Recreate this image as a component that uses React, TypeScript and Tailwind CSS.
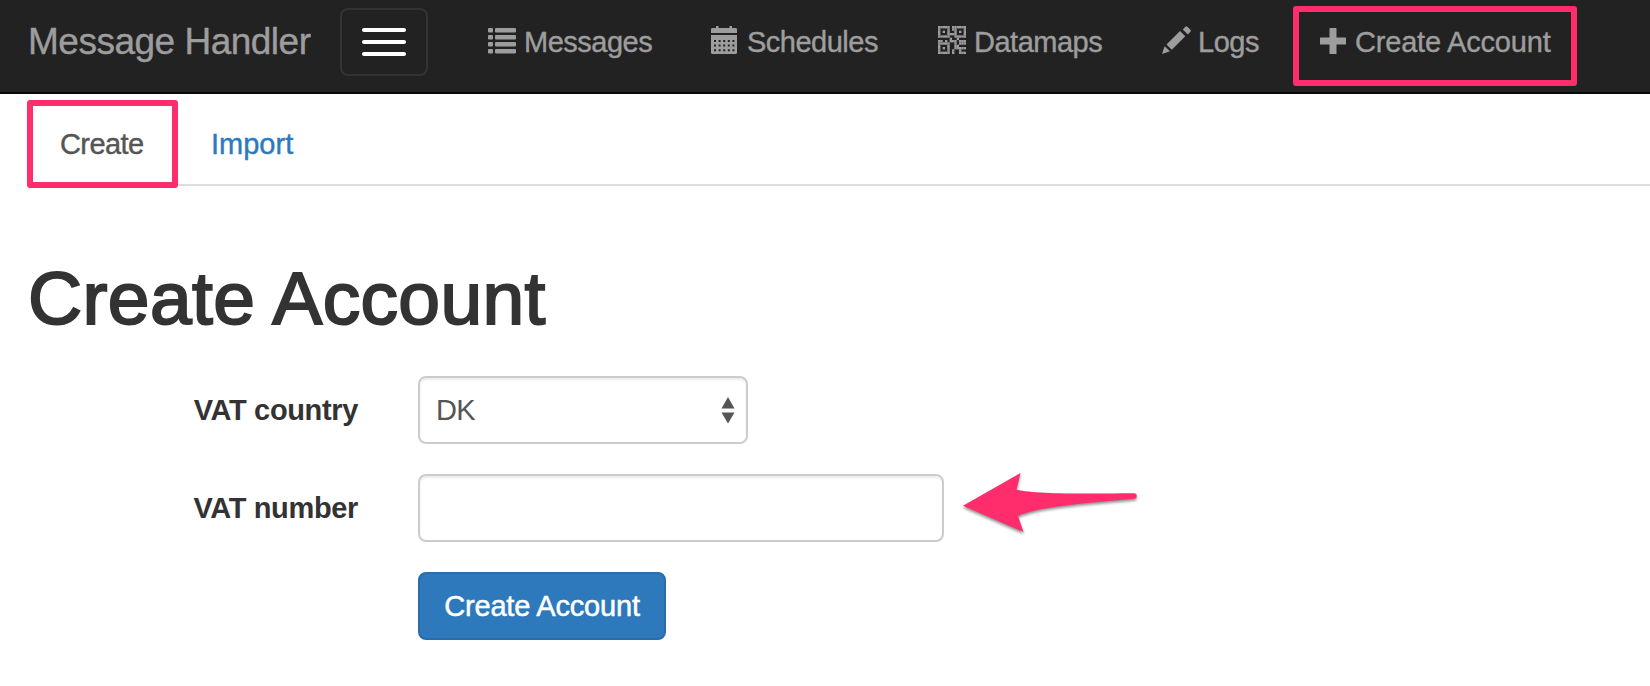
import React from "react";

const QR_ROWS = [
  "#####.######",
  "#...#.##...#",
  "#.#.#..#.#.#",
  "#...####...#",
  "#####..#####",
  ".....#..#...",
  "##.#.###.###",
  "#####..#.###",
  "#...#..##...",
  "#.#.#..#####",
  "#...#.#..#..",
  "#####.#..###",
];

function ListIcon() {
  return (
    <svg className="mt-[5px] block h-[28px] w-[28px]" viewBox="0 0 28 28" fill="currentColor">
      {[1, 8, 15, 22].map((y) => (
        <g key={y}>
          <rect x="0" y={y} width="5" height="4.6" rx="1" />
          <rect x="7" y={y} width="21" height="4.6" rx="1" />
        </g>
      ))}
    </svg>
  );
}

function CalendarIcon() {
  return (
    <svg className="mt-[4px] block h-[28px] w-[26px]" viewBox="0 0 26 28" fill="currentColor">
      <path d="M5 2V0h2.500v2h11V0H21v2h3.600Q26 2 26 3.400V7H0V3.400Q0 2 1.400 2Z" />
      <path
        fillRule="evenodd"
        d="M0 9h26v17.500q0 1.500-1.500 1.500h-23Q0 28 0 26.500ZM3 14v2h2v-2zm4.600 0v2h2v-2zm4.600 0v2h2v-2zm4.600 0v2h2v-2zm4.600 0v2h2v-2zM3 18.600v2h2v-2zm4.600 0v2h2v-2zm4.600 0v2h2v-2zm4.600 0v2h2v-2zm4.600 0v2h2v-2zM3 23.200v2h2v-2zm4.600 0v2h2v-2zm4.600 0v2h2v-2zm4.600 0v2h2v-2zm4.600 0v2h2v-2z"
      />
    </svg>
  );
}

function QrIcon() {
  return (
    <svg className="mt-[4px] block h-[28px] w-[28px]" viewBox="0 0 12 12" fill="currentColor">
      {QR_ROWS.flatMap((row, y) =>
        row.split("").map((c, x) =>
          c === "#" ? <rect key={`${x}-${y}`} x={x} y={y} width="1.02" height="1.02" /> : null,
        ),
      )}
    </svg>
  );
}

function PencilIcon() {
  return (
    <svg className="mt-[4px] block h-[28px] w-[29px]" viewBox="0 0 29 28" fill="currentColor">
      <path d="M0 28 2.600 20.300 8 25.300Z" />
      <path d="M4.500 18.500 18 5l5.300 5.300L9.800 23.800Z" />
      <path d="M20.800 3.500 23.300.7q1-1 2.100 0l3 3q1 1 0 2.100l-2.500 2.700Z" />
    </svg>
  );
}

function PlusIcon() {
  return (
    <svg className="mt-[6px] block h-[26px] w-[26px]" viewBox="0 0 26 26" fill="currentColor">
      <path d="M9.500.6q0-.6.600-.6h5.800q.6 0 .6.600v8.900h8.900q.6 0 .6.600v5.800q0 .6-.6.600h-8.900v8.900q0 .6-.6.600h-5.800q-.6 0-.6-.6v-8.900H.6q-.6 0-.6-.6v-5.800q0-.6.600-.6h8.900Z" />
    </svg>
  );
}

export default function App() {
  return (
    <div className="h-[686px] w-[1650px] overflow-hidden bg-white font-['Liberation_Sans',Arial,sans-serif] text-[29px] leading-[40px] text-[#333]">
      <nav className="flex h-[94px] items-start border-b-2 border-[#080808] bg-[#222] pl-[28px] text-[#9d9d9d] [-webkit-text-stroke:0.4px_currentColor]">
        <a className="mt-[22px] w-[312px] text-[37px] tracking-[-0.5px] whitespace-nowrap">Message Handler</a>
        <button
          aria-label="Toggle navigation"
          className="mt-2 flex h-[68px] w-[88px] flex-col items-center gap-2 rounded-lg border-2 border-[#333] pt-[18px]"
        >
          <span className="h-1 w-11 rounded-[2px] bg-white" />
          <span className="h-1 w-11 rounded-[2px] bg-white" />
          <span className="h-1 w-11 rounded-[2px] bg-white" />
        </button>
        <ul className="flex pt-[22px] pl-[60px] whitespace-nowrap">
          <li className="flex w-[223px] gap-[8px] tracking-[-0.5px]">
            <ListIcon />
            Messages
          </li>
          <li className="flex w-[227px] gap-[10px] tracking-[-0.5px]">
            <CalendarIcon />
            Schedules
          </li>
          <li className="flex w-[224px] gap-[8px] tracking-[-0.5px]">
            <QrIcon />
            Datamaps
          </li>
          <li className="flex w-[158px] gap-[7px] tracking-[-0.5px]">
            <PencilIcon />
            Logs
          </li>
          <li className="relative flex gap-[9px] tracking-[-0.2px]">
            <PlusIcon />
            Create Account
            <span className="absolute -top-[16px] -left-[27.5px] h-[80px] w-[284px] rounded-[3px] border-6 border-[#ff2d6b]" />
          </li>
        </ul>
      </nav>

      <div className="ml-[30px] flex h-[92px] border-b-2 border-[#ddd] pt-[30px] [-webkit-text-stroke:0.4px_currentColor]">
        <a className="relative w-[151px] pl-[30px] tracking-[-0.6px] text-[#555]">
          Create
          <span className="absolute -top-[24px] -left-[3px] h-[88px] w-[151px] rounded-[3px] border-6 border-[#ff2d6b]" />
        </a>
        <a className="pl-[30px] text-[#2d79bb]">Import</a>
      </div>

      <h1 className="mt-[72px] ml-[28px] text-[75px] leading-[80px] tracking-[0.35px] [-webkit-text-stroke:2px_#333]">
        Create Account
      </h1>

      <form className="mt-[38px] grid w-max grid-cols-[358px_1fr] gap-x-[60px] gap-y-[30px]">
        <label className="mt-[14px] text-right text-[29px] font-bold tracking-[-0.35px]">VAT country</label>
        <div className="relative h-[68px] w-[330px]">
          <select className="block h-[68px] w-[330px] appearance-none rounded-lg border-2 border-[#ccc] bg-white pl-[16px] text-[29px] tracking-[-0.7px] text-[#555] shadow-[inset_0_2px_2px_rgba(0,0,0,0.075)]">
            <option>DK</option>
          </select>
          <svg
            className="pointer-events-none absolute top-[21px] right-[13px] h-[27px] w-[14px]"
            viewBox="0 0 14 27"
            fill="#555"
          >
            <path d="M7 0 13.500 11.500H.5ZM.5 15.500h13L7 26.500Z" />
          </svg>
        </div>

        <label className="mt-[14px] text-right text-[29px] font-bold tracking-[-0.35px]">VAT number</label>
        <div className="flex gap-[16px]">
          <input className="h-[68px] w-[526px] rounded-lg border-2 border-[#ccc] bg-white px-6 shadow-[inset_0_2px_2px_rgba(0,0,0,0.075)]" />
          <svg
            className="block h-[68px] w-[180px] overflow-visible [filter:drop-shadow(0_2px_1.5px_rgba(0,0,0,0.45))]"
            viewBox="960 474 180 68"
            fill="#ff2d6b"
          >
            <path d="M963 505.700 1020.500 473 1016.500 489.700C1034 493.500 1070 494 1134 493.300A2.700 2.700 0 0 1 1134 498.700C1085 503.500 1040 506 1018 516L1023.500 532Z" />
          </svg>
        </div>

        <button
          type="button"
          className="col-start-2 h-[68px] w-[248px] rounded-lg border-2 border-[#2a6da8] bg-[#2d79bb] tracking-[-0.2px] whitespace-nowrap text-white [-webkit-text-stroke:0.5px_white]"
        >
          Create Account
        </button>
      </form>
    </div>
  );
}
